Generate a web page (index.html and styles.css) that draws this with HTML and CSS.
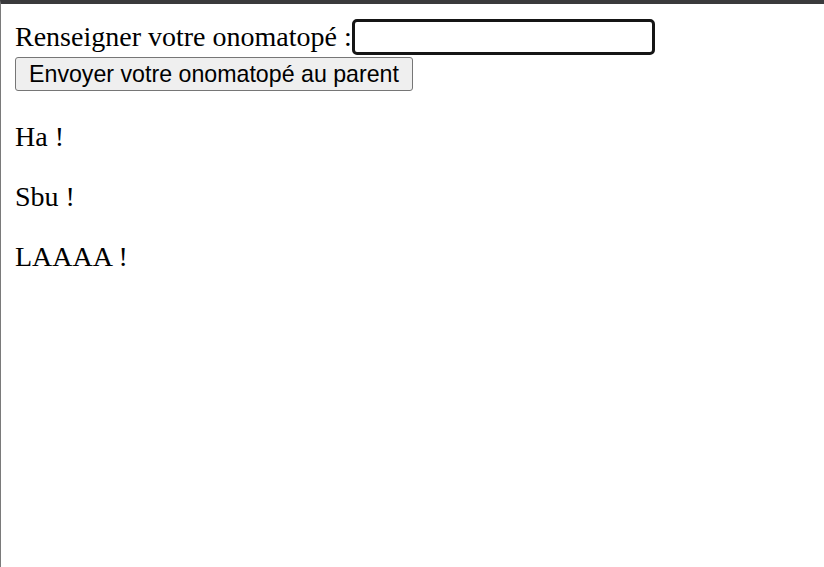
FILE: index.html
```html
<!DOCTYPE html>
<html lang="fr">
<head>
<meta charset="utf-8">
<title>Onomatopé</title>
<link rel="stylesheet" href="styles.css">
</head>
<body>
<div class="frame">
  <div class="form-line">
    <label class="label" for="ono">Renseigner votre onomatopé :</label><input class="field" id="ono" type="text">
  </div>
  <button class="send" type="button">Envoyer votre onomatopé au parent</button>
  <div class="list">
    <p class="item">Ha !</p>
    <p class="item">Sbu !</p>
    <p class="item">LAAAA !</p>
  </div>
</div>
</body>
</html>
```

FILE: styles.css
```css
html, body {
  margin: 0;
  padding: 0;
  height: 100%;
  background: #ffffff;
}

.frame {
  box-sizing: border-box;
  height: 100%;
  border-top: 4px solid #3a3a3c;
  border-left: 1px solid #7a7a7a;
  padding: 14px;
  font-family: "Liberation Serif", "Times New Roman", serif;
  font-size: 28px;
  color: #000;
}

.form-line {
  display: flex;
  align-items: flex-end;
  height: 39px;
}

.label {
  line-height: 32px;
  padding-bottom: 4px;
}

.field {
  box-sizing: border-box;
  width: 303px;
  height: 36px;
  margin: 1px 0 0 0;
  border: 3px solid #151515;
  border-radius: 5px;
  background: #fff;
  outline: none;
  font-family: "Liberation Sans", Arial, sans-serif;
  font-size: 23px;
  align-self: flex-start;
}

.send {
  display: block;
  box-sizing: border-box;
  width: 398px;
  height: 34px;
  margin: 0;
  padding: 0;
  background: #efefef;
  border: 1px solid #767676;
  border-radius: 3px;
  font-family: "Liberation Sans", Arial, sans-serif;
  font-size: 23.2px;
  color: #000;
  line-height: 30px;
  text-align: center;
}

.list {
  padding-top: 2px;
}

.item {
  margin: 28px 0;
  line-height: 32px;
}
```
